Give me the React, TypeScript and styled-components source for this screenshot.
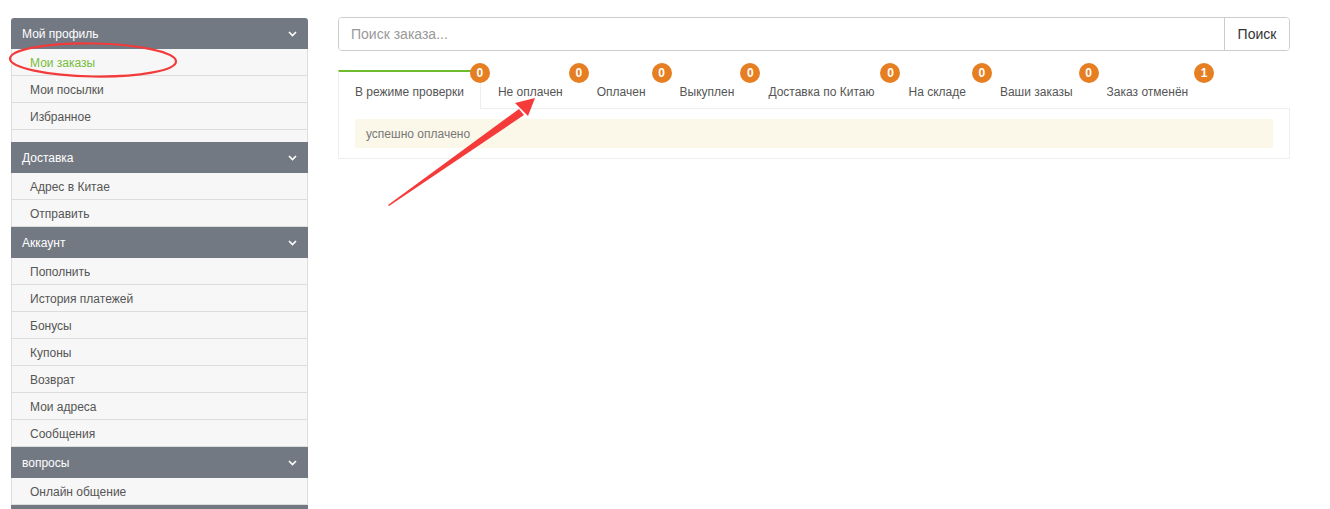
import React from 'react';
import styled, { createGlobalStyle } from 'styled-components';

const GlobalStyle = createGlobalStyle`
  html, body {
    margin: 0;
    padding: 0;
    overflow: hidden;
    background: #fff;
  }
  body {
    font-family: 'Liberation Sans', Arial, sans-serif;
    font-size: 12px;
    color: #555;
  }
  * {
    box-sizing: border-box;
  }
`;

const Page = styled.div`
  position: relative;
  display: flex;
  align-items: flex-start;
  gap: 30px;
  height: 509px;
  overflow: hidden;
  padding: 17px 40px 0 11px;
`;

const Sidebar = styled.nav`
  width: 297px;
  flex-shrink: 0;
  margin-top: 1px;
  border-radius: 3px 3px 0 0;
  overflow: hidden;
`;

const SectionHeader = styled.div`
  display: flex;
  align-items: center;
  justify-content: space-between;
  height: 31px;
  padding: 0 11px 0 11px;
  background: #737983;
  color: #fff;
  font-size: 12px;
`;

type RowProps = {
  active?: boolean;
};

const Row = styled.div<RowProps>`
  display: flex;
  align-items: center;
  height: 27px;
  padding-left: 18px;
  padding-top: 1px;
  background: #f7f7f7;
  border-left: 1px solid #ddd;
  border-right: 1px solid #ddd;
  border-bottom: 1px solid #ddd;
  color: ${(p) => (p.active ? '#76bd3c' : '#555')};
  font-size: 12px;
`;

const Spacer = styled.div`
  height: 12px;
  background: #f7f7f7;
  border-left: 1px solid #ddd;
  border-right: 1px solid #ddd;
`;

const Main = styled.main`
  flex: 1;
  display: flex;
  flex-direction: column;
`;

const SearchBar = styled.div`
  display: flex;
  height: 34px;
  border: 1px solid #ccc;
  border-radius: 4px;
  overflow: hidden;
`;

const SearchInput = styled.input`
  flex: 1;
  border: none;
  outline: none;
  padding: 0 12px;
  font-family: 'Liberation Sans', Arial, sans-serif;
  font-size: 14px;
  color: #555;
  &::placeholder {
    color: #999;
  }
`;

const SearchButton = styled.button`
  width: 65px;
  border: none;
  border-left: 1px solid #ccc;
  background: #fff;
  font-family: 'Liberation Sans', Arial, sans-serif;
  font-size: 14px;
  color: #333;
  padding: 0;
`;

const Tabs = styled.div`
  display: flex;
  margin-top: 19px;
  height: 39px;
`;

type TabProps = {
  active?: boolean;
};

const Tab = styled.div<TabProps>`
  position: relative;
  display: flex;
  align-items: center;
  padding: 2px 16px 0 16px;
  height: 39px;
  color: #555;
  font-size: 12px;
  white-space: nowrap;
  background: ${(p) => (p.active ? '#fff' : 'transparent')};
  border-top: 2px solid ${(p) => (p.active ? '#6fbb2f' : 'transparent')};
  border-left: 1px solid ${(p) => (p.active ? '#eee' : 'transparent')};
  border-right: 1px solid ${(p) => (p.active ? '#eee' : 'transparent')};
`;

const Badge = styled.span`
  position: absolute;
  top: -9px;
  right: -10px;
  width: 20px;
  height: 20px;
  border-radius: 50%;
  background: #e67e22;
  color: #fff;
  font-size: 12px;
  font-weight: bold;
  display: flex;
  align-items: center;
  justify-content: center;
  z-index: 1;
`;

const Panel = styled.div`
  border: 1px solid #eee;
  padding: 10px 16px;
  margin-top: -1px;
`;

const Alert = styled.div`
  height: 29px;
  display: flex;
  align-items: center;
  padding-left: 11px;
  background: #fcf8e9;
  color: #777;
  font-size: 12px;
`;

const Overlay = styled.svg`
  position: absolute;
  left: 0;
  top: 0;
  pointer-events: none;
`;

const Chevron = () => (
  <svg width="9" height="6" viewBox="0 0 9 6">
    <polyline points="1,1 4.5,4.5 8,1" fill="none" stroke="#fff" strokeWidth="1.6" />
  </svg>
);

type Section = {
  title: string;
  items: string[];
  spacer?: boolean;
};

const sections: Section[] = [
  { title: 'Мой профиль', items: ['Мои заказы', 'Мои посылки', 'Избранное'], spacer: true },
  { title: 'Доставка', items: ['Адрес в Китае', 'Отправить'] },
  {
    title: 'Аккаунт',
    items: ['Пополнить', 'История платежей', 'Бонусы', 'Купоны', 'Возврат', 'Мои адреса', 'Сообщения'],
  },
  { title: 'вопросы', items: ['Онлайн общение'] },
];

const tabs = [
  { label: 'В режиме проверки', count: 0 },
  { label: 'Не оплачен', count: 0 },
  { label: 'Оплачен', count: 0 },
  { label: 'Выкуплен', count: 0 },
  { label: 'Доставка по Китаю', count: 0 },
  { label: 'На складе', count: 0 },
  { label: 'Ваши заказы', count: 0 },
  { label: 'Заказ отменён', count: 1 },
];

const App = () => {
  return (
    <>
      <GlobalStyle />
      <Page>
        <Sidebar>
          {sections.map((s) => (
            <div key={s.title}>
              <SectionHeader>
                <span>{s.title}</span>
                <Chevron />
              </SectionHeader>
              {s.items.map((item) => (
                <Row key={item} active={item === 'Мои заказы'}>
                  {item}
                </Row>
              ))}
              {s.spacer && <Spacer />}
            </div>
          ))}
          {/* next section header, cut off by the bottom of the window */}
          <SectionHeader />
        </Sidebar>

        <Main>
          <SearchBar>
            <SearchInput placeholder="Поиск заказа..." />
            <SearchButton>Поиск</SearchButton>
          </SearchBar>
          <Tabs>
            {tabs.map((t, i) => (
              <Tab key={t.label} active={i === 0}>
                {t.label}
                <Badge>{t.count}</Badge>
              </Tab>
            ))}
          </Tabs>
          <Panel>
            <Alert>успешно оплачено</Alert>
          </Panel>
        </Main>

        <Overlay width="1330" height="509" viewBox="0 0 1330 509">
          <ellipse cx="93" cy="60" rx="83" ry="16.5" fill="none" stroke="#f33b3b" strokeWidth="2.2" transform="rotate(1 93 60)" />
          <polygon points="388,205 519,109 524,115 389,206" fill="#f53a3a" />
          <polygon points="535,98 515,103 528,116" fill="#f53a3a" />
        </Overlay>
      </Page>
    </>
  );
};

export default App;
